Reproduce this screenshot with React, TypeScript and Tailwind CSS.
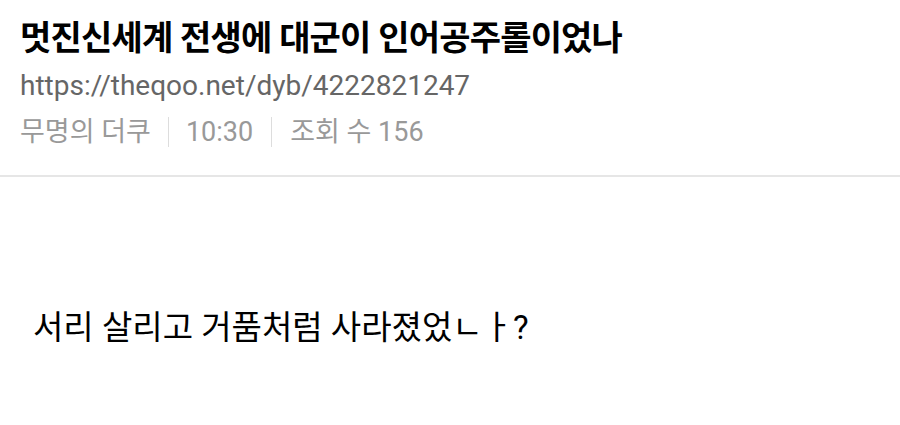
export default function App() {
  return (
    <div className="w-[900px] h-[425px] bg-white overflow-hidden font-['Roboto','Noto_Sans_CJK_KR',sans-serif]">
      {/* Post header */}
      <div className="px-[20px] pt-[15px] pb-[25px] border-b-2 border-[#e6e6e6]">
        <h1 className="text-[34px] leading-[46px] font-bold text-black tracking-[-0.8px]">
          멋진신세계 전생에 대군이 인어공주롤이었나
        </h1>
        <div className="mt-[7px] text-[28px] leading-[36px] text-[#666]">
          https://theqoo.net/dyb/4222821247
        </div>
        <div className="mt-[10px] flex items-center text-[27px] leading-[36px] text-[#999]">
          <span>무명의 더쿠</span>
          <span className="mx-[17px] w-px h-[30px] bg-[#ddd]" />
          <span>10:30</span>
          <span className="mx-[18px] w-px h-[30px] bg-[#ddd]" />
          <span>조회 수 156</span>
        </div>
      </div>

      {/* Post body */}
      <div className="px-[33px] pt-[129px] text-[33px] leading-[44px] text-black">
        서리 살리고 거품처럼 사라졌었ㄴㅏ?
      </div>
    </div>
  );
}
